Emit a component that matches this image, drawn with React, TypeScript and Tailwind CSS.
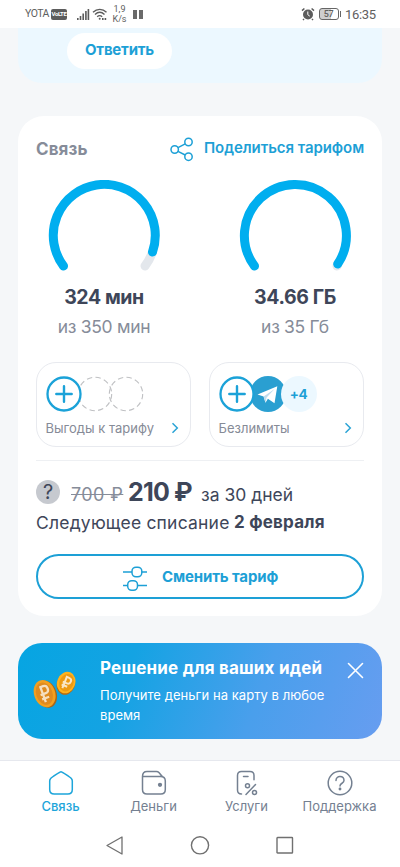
import React from 'react';

function StatusBar() {
  return (
    <header className="flex h-7 shrink-0 items-center bg-white pl-[25px] pr-6 text-[#606060]">
      <span className="w-[26px] whitespace-nowrap font-[Roboto] text-[10.5px] leading-none tracking-[-0.5px]">YOTA</span>
      <span className="flex h-[11px] w-4 items-center justify-center rounded-[2px] bg-[#5c5c5c] font-[Roboto] text-[6px] font-bold leading-none tracking-[-0.4px] text-white">
        VoLTE
      </span>
      <svg className="ml-[9px]" width="14" height="13" viewBox="0 0 14 13" fill="#5c5c5c">
        <rect x="1" y="10" width="1.6" height="2" />
        <rect x="3.7" y="8" width="1.6" height="4" />
        <rect x="6.4" y="5.5" width="1.6" height="6.5" />
        <rect x="9.1" y="3" width="1.6" height="9" />
        <rect x="11.6" y="1" width="1.6" height="11" />
      </svg>
      <svg className="ml-[2px]" width="16" height="13" viewBox="0 0 16 13" fill="none" stroke="#5c5c5c" strokeWidth="1.4">
        <path d="M1 4.2C5 .4 10.500 .4 14.500 4.200M3 6.500c3-2.800 6.500-2.800 9.500 0M5.200 8.700c1.600-1.400 3.400-1.400 5 0" />
        <circle cx="7.700" cy="10.700" r="1" fill="#5c5c5c" stroke="none" />
        <path d="M10 11h1.600M12.600 11h1.600" strokeWidth="1.800" />
      </svg>
      <span className="ml-[3px] flex w-[17px] flex-col items-center font-[Roboto] text-[9px] leading-[10px]">
        <span>1,9</span>
        <span>K/s</span>
      </span>
      <span className="ml-[5px] flex gap-[1.5px]">
        <i className="h-[9px] w-1 bg-[#6a6a6a]" />
        <i className="h-[9px] w-1 bg-[#6a6a6a]" />
      </span>
      <svg className="ml-auto" width="14" height="14" viewBox="0 0 14 14">
        <circle cx="7" cy="7.500" r="5" fill="#5c5c5c" />
        <path d="M1 3.600 3.400 1.500M13 3.600 10.600 1.500M3 12l-1 1M11 12l1 1" stroke="#5c5c5c" strokeWidth="1.500" />
        <path d="M6.800 4.500v3.200l2 1.500" stroke="#fff" fill="none" />
      </svg>
      <span className="ml-1 flex h-3 w-5 items-center justify-center rounded-[3px] border-[1.5px] border-[#666] bg-gradient-to-r from-[#cecece] from-60% to-white to-60% font-[Roboto] text-[9px] font-medium leading-none tracking-[-0.3px]">
        57
      </span>
      <i className="ml-px h-[6px] w-[1.500px] bg-[#666]" />
      <span className="ml-[4px] w-[31px] whitespace-nowrap font-[Roboto] text-[13px] leading-none tracking-[-0.35px]">16:35</span>
    </header>
  );
}

type GaugeProps = { value: string; total: string; arc: string; tip: string };

function Gauge({ value, total, arc, tip }: GaugeProps) {
  return (
    <div className="flex w-[112px] flex-col items-center whitespace-nowrap">
      <svg width="112" height="92" viewBox="0 0 112 92" fill="none" strokeWidth="9" strokeLinecap="round">
        <path d={tip} stroke="#e3e7ec" />
        <path d={arc} stroke="#00aeef" />
      </svg>
      <strong className="mt-[13px] text-[19.5px] font-bold leading-6 tracking-[-0.4px] text-[#3e4659]">{value}</strong>
      <span className="mt-[6px] text-[17.5px] leading-6 tracking-[-0.3px] text-[#868c99]">{total}</span>
    </div>
  );
}

function PlusCircle() {
  return (
    <svg className="relative z-10 shrink-0" width="36" height="36" viewBox="0 0 36 36" fill="none" stroke="#1ba2d8">
      <circle cx="18" cy="18" r="16.500" fill="#fff" strokeWidth="2.300" />
      <path d="M10.300 18h15.400M18 10.300v15.400" strokeWidth="2.400" strokeLinecap="round" />
    </svg>
  );
}

function DashedCircle() {
  return (
    <svg className="-ml-[5px] shrink-0" width="36" height="36" viewBox="0 0 36 36" fill="none">
      <circle cx="18" cy="18" r="16.700" stroke="#bfc0c3" strokeWidth="1.100" strokeDasharray="5.400 3.340" />
    </svg>
  );
}

function Chevron() {
  return (
    <svg width="8" height="12" viewBox="0 0 8 12" fill="none" stroke="#2aa4d6" strokeWidth="1.500">
      <path d="m1.500 1.200 4.800 4.800-4.800 4.800" />
    </svg>
  );
}

function OptionCard({ label, children }: { label: string; children: React.ReactNode }) {
  return (
    <div className="h-[85px] w-[155px] rounded-[20px] border border-[#e8eaef] pl-[8.5px] pr-[11.5px] pt-[13px]">
      <div className="flex">{children}</div>
      <div className="mt-[6px] flex items-center justify-between">
        <span className="whitespace-nowrap text-[13px] leading-5 text-[#868b97]">{label}</span>
        <Chevron />
      </div>
    </div>
  );
}

function TariffCard() {
  return (
    <section className="mx-[18px] mt-[33px] h-[500px] shrink-0 rounded-[26px] bg-white px-[18px]">
      <div className="flex h-16 items-center justify-between whitespace-nowrap pt-[2px]">
        <h2 className="text-[17px] font-bold leading-6 tracking-[0.1px] text-[#868c99]">Связь</h2>
        <a className="flex items-center text-[15px] font-semibold text-[#1da0d6]">
          <svg className="mr-[10px]" width="24" height="26" viewBox="0 0 24 26" fill="none" stroke="#1da0d6" strokeWidth="1.500">
            <circle cx="4.700" cy="13.500" r="3.700" />
            <circle cx="18.500" cy="6" r="3.700" />
            <circle cx="18.500" cy="20.700" r="3.700" />
            <path d="m8 11.700 7.200-3.900M8 15.300l7.200 3.700" />
          </svg>
          <span className="w-[160px] pb-[2px] leading-6 tracking-[-0.07px]">Поделиться тарифом</span>
        </a>
      </div>
      <div className="flex justify-between pl-[12px] pr-[13px]">
        <Gauge
          value="324 мин"
          total="из 350 мин"
          arc="M15.500 86A51 51 0 1 1 104.500 72"
          tip="M104.500 72A51 51 0 0 1 97 86"
        />
        <Gauge
          value="34.66 ГБ"
          total="из 35 Гб"
          arc="M15.500 86A51 51 0 1 1 98.700 84"
          tip="M98.700 84L98 86"
        />
      </div>
      <div className="mt-[23px] flex justify-between">
        <OptionCard label="Выгоды к тарифу">
          <PlusCircle />
          <DashedCircle />
          <DashedCircle />
        </OptionCard>
        <OptionCard label="Безлимиты">
          <PlusCircle />
          <svg className="-ml-[5px] shrink-0" width="36" height="36" viewBox="0 0 36 36">
            <circle cx="18" cy="18" r="18" fill="#2a9fd1" />
            <path d="M7.500 18.500 27.300 10.300 24.500 27.300 17.900 22.700 15.500 26.800 13.600 20.400z" fill="#fff" />
            <path d="m13.600 20.400 11-7.500-8 8.600-1.100 5.300" fill="#bedced" />
          </svg>
          <span className="z-10 -ml-[5px] flex h-9 w-9 items-center justify-center rounded-full bg-[#ecf8ff] text-[13.5px] font-bold tracking-[-0.4px] text-[#1da0d6]">
            +4
          </span>
        </OptionCard>
      </div>
      <hr className="mt-[13px] border-[#eef0f3]" />
      <div className="mt-[15px] flex h-8 items-baseline whitespace-nowrap text-[#3e4659]">
        <span className="flex h-6 w-6 items-center justify-center self-center rounded-full bg-[#c6c9cf] text-[20px] font-normal">?</span>
        <s className="ml-[11px] w-[57px] text-[18px] tracking-[0.4px] text-[#868c99]">700 ₽</s>
        <strong className="w-[73px] text-[25px] font-bold leading-8 tracking-[-0.8px]">210 ₽</strong>
        <span className="text-[17.5px]">за 30 дней</span>
      </div>
      <p className="flex h-[30px] items-center whitespace-nowrap text-[17px] text-[#3e4659]">
        <span className="w-[198px] text-[17.5px] tracking-[0.2px]">Следующее списание</span>
        <strong className="font-bold tracking-[0.2px]">2 февраля</strong>
      </p>
      <button className="mt-[16px] flex h-[45px] w-full items-center whitespace-nowrap rounded-full border-2 border-[#1da0d6] pl-[85px] text-[15px] font-bold text-[#1da0d6]">
        <svg className="mr-[15px] mt-1" width="24" height="26" viewBox="0 0 24 26" fill="none" stroke="#1da0d6" strokeWidth="1.500">
          <path d="M0 6h9M19 6h5M0 19.500h5M14.500 19.500H24" />
          <rect x="9" y="1.200" width="9.800" height="9.600" rx="4" />
          <rect x="4.700" y="14.700" width="9.800" height="9.600" rx="4" />
        </svg>
        <span className="pt-px tracking-[-0.13px]">Сменить тариф</span>
      </button>
    </section>
  );
}

function Coins() {
  return (
    <svg className="ml-[14px] mt-[27px] shrink-0" width="46" height="42" viewBox="0 0 46 42" fill="none">
      <g transform="rotate(-20 13 24)">
        <ellipse cx="14" cy="24.500" rx="10.500" ry="14" fill="#a86618" />
        <ellipse cx="12.800" cy="23.500" rx="10.500" ry="14" fill="#f3a01f" />
        <ellipse cx="12.500" cy="23.500" rx="8.200" ry="11.500" fill="#df8b20" />
        <path d="M11 32V16h3c4.500 0 4.500 7.500 0 7.500H8.500M8.500 28h7.500" stroke="#f5dfc0" strokeWidth="2.300" />
      </g>
      <g transform="rotate(22 34 13)">
        <ellipse cx="34.300" cy="14" rx="9" ry="11" fill="#b66b12" />
        <ellipse cx="34" cy="12.500" rx="9" ry="11" fill="#ffb21c" />
        <ellipse cx="34.300" cy="12.500" rx="7" ry="9" fill="#ed9a12" />
        <path d="M32.500 19V7H35c4 0 4 6 0 6h-4.500M30.500 16h6" stroke="#f9e6c5" strokeWidth="2" />
      </g>
    </svg>
  );
}

function Promo() {
  return (
    <section className="mx-[18px] mt-[27px] flex h-24 shrink-0 rounded-[24px] bg-[linear-gradient(110deg,#06a5e2_0%,#14a3e3_30%,#499fec_65%,#679df0_100%)] text-white">
      <Coins />
      <div className="ml-[22px] w-[230px] whitespace-nowrap pt-[13px]">
        <h3 className="text-[17px] font-bold leading-6 tracking-[0.2px]">Решение для ваших идей</h3>
        <p className="mt-[5px] text-[13px] leading-5 tracking-[0.05px]">
          Получите деньги на карту в любое
          <br />
          время
        </p>
      </div>
      <svg className="ml-[17px] mt-[19px]" width="17" height="17" viewBox="0 0 17 17" stroke="#fff" strokeWidth="1.600" strokeLinecap="round">
        <path d="m1.500 1.500 14 14M15.500 1.500l-14 14" />
      </svg>
    </section>
  );
}

function NavItem({ label, color, children }: { label: string; color: string; children: React.ReactNode }) {
  return (
    <div className={'flex w-[93px] flex-col items-center whitespace-nowrap text-[13px] ' + color}>
      <svg width="26" height="26" viewBox="0 0 26 26" fill="none" stroke="currentColor" strokeWidth="1.500" strokeLinecap="round" strokeLinejoin="round">
        {children}
      </svg>
      <span className="leading-5">{label}</span>
    </div>
  );
}

function BottomNav() {
  return (
    <nav className="mt-[21px] h-[107px] shrink-0 border-t border-[#e6e8ee] bg-white">
      <div className="flex pl-[14px] pt-[9px]">
        <NavItem label="Связь" color="text-[#1da5da] font-medium">
          <path d="M13 1.800c1 0 9.200 5.600 10.300 6.700.7.700 1 1.500 1 2.500v8.500c0 3-1.500 4.500-4.500 4.500H6.200c-3 0-4.500-1.500-4.500-4.500V11c0-1 .3-1.800 1-2.500C3.800 7.400 12 1.800 13 1.800z" />
        </NavItem>
        <NavItem label="Деньги" color="text-[#748091]">
          <path d="M1.500 6.500h18c3 0 4.800 1.500 4.800 4.500v8.500c0 3-1.500 4.500-4.500 4.500H6c-3 0-4.500-1.500-4.500-4.500v-13c0-3 1.500-5 4.500-5h9.500c1 0 1.700.3 2.400 1l3.600 4.300" />
          <circle cx="19" cy="14.800" r="1.400" fill="currentColor" />
        </NavItem>
        <NavItem label="Услуги" color="text-[#748091]">
          <path d="M7.500 24C5 24 3.500 22.500 3.500 20V5.500c0-2.700 1.300-4 4-4H16c2.700 0 4 1.300 4 4v4.200M9.500 6.600H14M21.500 14.500 12 24.500" />
          <circle cx="13.500" cy="15.700" r="2" />
          <circle cx="20.500" cy="22.500" r="2" />
        </NavItem>
        <NavItem label="Поддержка" color="text-[#748091]">
          <circle cx="13" cy="13" r="11.800" />
          <path d="M9 10.500c0-5.500 8-5 8 0 0 3-4 2.500-4 5.500" />
          <circle cx="13" cy="19" r=".7" fill="currentColor" />
        </NavItem>
      </div>
      <div className="mt-[18px] flex justify-between px-[105px]">
        <svg width="20" height="22" viewBox="0 0 20 22" fill="none" stroke="#707070" strokeWidth="1.300" strokeLinejoin="round">
          <path d="M17 3v17L2 11.500z" />
        </svg>
        <svg width="20" height="22" viewBox="0 0 20 22" fill="none" stroke="#707070" strokeWidth="1.400">
          <circle cx="10" cy="11.300" r="8.600" />
        </svg>
        <svg width="20" height="22" viewBox="0 0 20 22" fill="none" stroke="#707070" strokeWidth="1.400">
          <rect x="2" y="3.500" width="15.500" height="15.500" rx=".6" />
        </svg>
      </div>
    </nav>
  );
}

export default function App() {
  return (
    <main className="flex h-[867px] w-[400px] flex-col overflow-hidden bg-[#f5f7f9] font-[Inter,'Noto_Sans',sans-serif]">
      <StatusBar />
      <section className="mx-[18px] h-[55px] shrink-0 rounded-b-[24px] bg-[#ecf8ff] pl-[49px] pt-[5px]">
        <button className="flex h-9 w-[105px] items-center justify-center whitespace-nowrap rounded-full bg-white pb-[2px] text-[15px] font-bold tracking-[-0.2px] text-[#1da0d6]">
          Ответить
        </button>
      </section>
      <TariffCard />
      <Promo />
      <BottomNav />
    </main>
  );
}
